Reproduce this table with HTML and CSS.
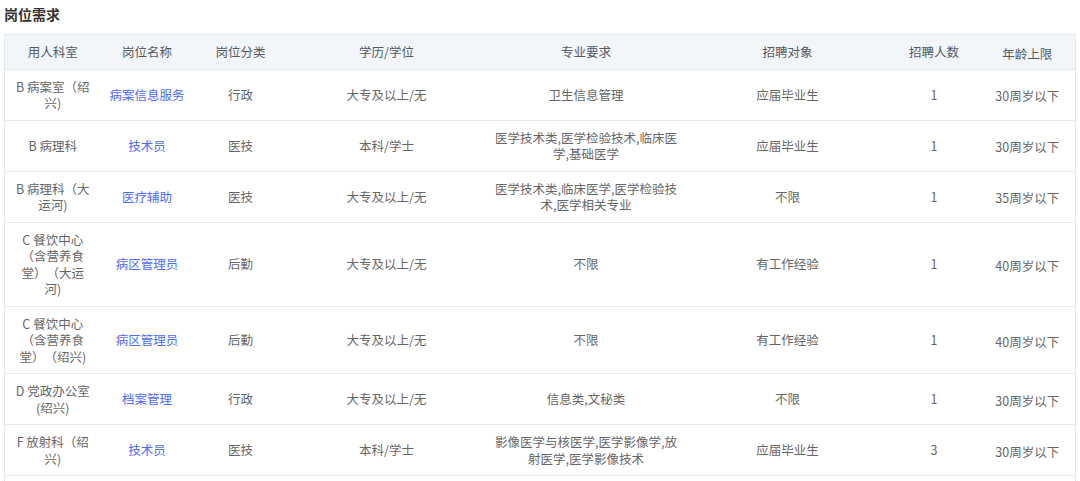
FILE: index.html
```html
<!DOCTYPE html>
<html lang="zh-CN">
<head>
<meta charset="utf-8">
<title>岗位需求</title>
<link rel="stylesheet" href="styles.css">
</head>
<body>
<div class="page">
  <h2 class="title">岗位需求</h2>
  <table class="jobs">
    <colgroup>
      <col class="c1"><col class="c2"><col class="c3"><col class="c4">
      <col class="c5"><col class="c6"><col class="c7"><col class="c8">
    </colgroup>
    <thead>
      <tr>
        <th>用人科室</th><th>岗位名称</th><th>岗位分类</th><th>学历/学位</th>
        <th>专业要求</th><th>招聘对象</th><th>招聘人数</th><th class="age-h">年龄上限</th>
      </tr>
    </thead>
    <tbody>
      <tr>
        <td>B 病案室（绍兴)</td><td class="link">病案信息服务</td><td>行政</td><td>大专及以上/无</td>
        <td>卫生信息管理</td><td>应届毕业生</td><td class="num">1</td><td class="age">30周岁以下</td>
      </tr>
      <tr>
        <td>B 病理科</td><td class="link">技术员</td><td>医技</td><td>本科/学士</td>
        <td>医学技术类,医学检验技术,临床医学,基础医学</td><td>应届毕业生</td><td class="num">1</td><td class="age">30周岁以下</td>
      </tr>
      <tr>
        <td>B 病理科（大运河)</td><td class="link">医疗辅助</td><td>医技</td><td>大专及以上/无</td>
        <td>医学技术类,临床医学,医学检验技术,医学相关专业</td><td>不限</td><td class="num">1</td><td class="age">35周岁以下</td>
      </tr>
      <tr>
        <td>C 餐饮中心（含营养食堂）（大运河)</td><td class="link">病区管理员</td><td>后勤</td><td>大专及以上/无</td>
        <td>不限</td><td>有工作经验</td><td class="num">1</td><td class="age">40周岁以下</td>
      </tr>
      <tr>
        <td>C 餐饮中心（含营养食堂）（绍兴)</td><td class="link">病区管理员</td><td>后勤</td><td>大专及以上/无</td>
        <td>不限</td><td>有工作经验</td><td class="num">1</td><td class="age">40周岁以下</td>
      </tr>
      <tr>
        <td>D 党政办公室(绍兴)</td><td class="link">档案管理</td><td>行政</td><td>大专及以上/无</td>
        <td>信息类,文秘类</td><td>不限</td><td class="num">1</td><td class="age">30周岁以下</td>
      </tr>
      <tr>
        <td>F 放射科（绍兴)</td><td class="link">技术员</td><td>医技</td><td>本科/学士</td>
        <td>影像医学与核医学,医学影像学,放射医学,医学影像技术</td><td>应届毕业生</td><td class="num">3</td><td class="age">30周岁以下</td>
      </tr>
      <tr class="partial">
        <td></td><td></td><td></td><td></td><td></td><td></td><td></td><td></td>
      </tr>
    </tbody>
  </table>
</div>
</body>
</html>
```

FILE: styles.css
```css
* { box-sizing: border-box; }

html, body {
  margin: 0;
  padding: 0;
  background: #ffffff;
}

body {
  font-family: "Noto Sans CJK SC", "Noto Sans", sans-serif;
  color: #666666;
  text-spacing-trim: space-all;
}

.page {
  padding: 4px 0 0 4px;
}

.title {
  margin: 0;
  font-size: 14px;
  line-height: 20px;
  font-weight: 700;
  color: #333333;
}

.jobs {
  margin-top: 10px;
  width: 1071px;
  table-layout: fixed;
  border-collapse: collapse;
  border: 1px solid #e6e9ee;
  font-size: 12.5px;
  line-height: 16.5px;
}

.c1 { width: 96px; }
.c2 { width: 93px; }
.c3 { width: 94px; }
.c4 { width: 198px; }
.c5 { width: 201px; }
.c6 { width: 202px; }
.c7 { width: 91px; }
.c8 { width: 96px; }

.jobs th {
  background: #f2f5fa;
  color: #555a60;
  font-weight: 400;
  padding: 9px 8px 8px;
  text-align: center;
  border-bottom: 1px solid #e6e9ee;
}

.jobs th.age-h {
  padding-top: 10.5px;
  padding-bottom: 6.5px;
}

.jobs td {
  padding: 9px 10.75px 8px;
  text-align: center;
  vertical-align: middle;
  border-bottom: 1px solid #e6e9ee;
  color: #666666;
}

.jobs td:nth-child(5) {
  padding-left: 8px;
  padding-right: 8px;
}

.jobs td.link {
  color: #4d6cf3;
  padding-left: 4px;
  padding-right: 4px;
}

.jobs td.age {
  padding-top: 10.5px;
  padding-bottom: 6.5px;
  padding-left: 4px;
  padding-right: 4px;
}

.jobs tr.partial td {
  height: 20px;
  border-bottom: none;
}
```
